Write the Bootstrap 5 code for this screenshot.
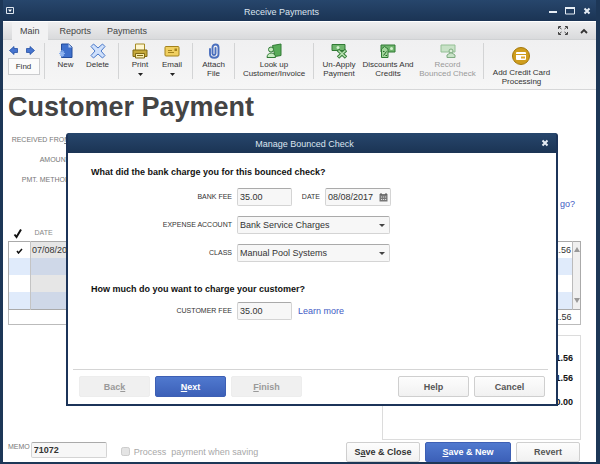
<!DOCTYPE html>
<html lang="en">
<head>
<meta charset="utf-8">
<meta name="viewport" content="width=device-width, initial-scale=1">
<title>Receive Payments</title>
<link href="https://cdn.jsdelivr.net/npm/bootstrap@5.3.0/dist/css/bootstrap.min.css" rel="stylesheet">
<style>
:root{--navy:#1d3757;--navy-grad:linear-gradient(#27466c,#1b3454)}
body{font-family:"Liberation Sans",Arial,sans-serif;font-size:9px;line-height:12px;color:#333;background:#fff}
button,input,select{font-family:inherit}
.app-window{border:solid var(--navy);border-width:0 4px 3px 3px;min-height:100vh}
.title-bar{background:var(--navy-grad);color:#dce5ef;height:21px;padding:0 5px 0 3px}
.bar-title{padding-top:2px}
.win-btn{background:none;border:0;padding:0;color:#e6edf5;line-height:0}
.tab-strip{background:linear-gradient(#eeeeef,#d9dadc);height:18px;margin-top:1px;border-bottom:1px solid #cfd1d3;padding-left:9px}
.tab-strip .nav-link{padding:3px 8px 2px;color:#444;font-size:9px;line-height:13px;border-radius:0}
.tab-strip .nav-link.active{background:#f2f2f3;padding:3px 8px}
.tool-bar{background:linear-gradient(#f0f0f1,#f6f6f6);height:50px;border-bottom:1px solid #d6d7d8;font-size:8px;line-height:9px;padding-top:3px}
.tool-group{height:36px;border-right:1px solid #d3d4d5}
.tool-group:last-child{border:0}
.tool{background:none;border:0;padding:0;color:#333;display:flex;flex-direction:column;align-items:center;align-self:flex-start;font-size:8px;line-height:9px}
.tool svg{margin-bottom:1px;flex-shrink:0}
.tool:disabled{color:#999}
.w-s{width:32px}.w-m{width:46px}.w-l{width:52px}.w-x{width:67px}
.g1{width:42px}.g2{width:74px}.g3{width:42px}.g4{width:79px}.g5{width:170px}.g6{width:75px}
.arrows{padding:3px 4px 3px 0}
.find-btn{width:32px;height:17px;border:1px solid #cbccce;background:#fbfbfb;font-size:8px;line-height:9px;padding:0;color:#333}
.page-title{font-size:27px;line-height:34px;font-weight:700;color:#444;margin:0;padding-left:5px}
.cap-label{font-size:7px;line-height:10px;color:#777}
.back-form{padding:6px 5px 0 5px}
.back-form .f-row{height:20px;width:62px}
.blue-link{color:#3f5bc4;text-decoration:none}
.ledger-wrap{margin:0 15px 0 5px}
.ledger{width:100%;table-layout:fixed;border-collapse:collapse}
.ledger th{font-weight:400;font-size:7px;color:#888;height:15px;padding:0 0 0 4px;line-height:10px}
.ledger td{height:17px;padding:0 1px;line-height:12px;vertical-align:middle}
.ledger tbody td:nth-child(2){background:#e6e6e6;border-left:1px solid #c4c4c4}
.ledger tbody tr:nth-child(even) td{background:#e0ebfb}
.ledger tbody tr:nth-child(even) td:nth-child(2){background:#cfd8e8}
.ledger tbody{border:1px solid #aaa}
.ledger tfoot{border:1px solid #bbb}
.ledger tfoot td{height:15px}
.ledger .scroll-cell,.ledger tbody tr:nth-child(even) td.scroll-cell{background:#f0f0f0;border-left:1px solid #bbb;padding:0;text-align:center;line-height:0}
.c-check{width:22px}.c-scroll{width:8px}
.sum-box{border:1px solid #dcdcdc;width:199px;height:105px;margin:10px 15px 0 auto;padding:16px 7px 0;color:#111;font-weight:700}
.field{border:1px solid #d4d4d4;border-top-color:#aaa;border-radius:2px;background:#f7f7f7;color:#333;font-size:9px;line-height:12px;height:18px;padding:0 2px;min-width:0}
.memo-field{width:76px;height:16px;font-weight:700}
.foot-bar{padding:2px 16px 0 5px;height:22px}
.foot-bar .cap-label{margin-right:1px}
.proc{margin-left:14px}
.tick{width:9px;height:9px;margin:0;border-radius:2px;background:#e4e4e4;border-color:#ccc}
.tick:disabled,.tick:disabled~label{opacity:1}
.tick~label{color:#a8a8a8}
.app-btn{--bs-btn-padding-x:0px;--bs-btn-padding-y:0px;--bs-btn-font-size:9px;--bs-btn-line-height:12px;--bs-btn-font-weight:700;--bs-btn-border-radius:2px;--bs-btn-color:#555;--bs-btn-border-color:#cfcfcf;--bs-btn-disabled-color:#999;--bs-btn-disabled-border-color:#ededed;--bs-btn-disabled-opacity:1;background:linear-gradient(#fdfdfd,#f1f1f1);width:71px;height:21px}
.app-btn:disabled{background:#f0f0f0}
.app-btn.go{--bs-btn-color:#fff;--bs-btn-border-color:#3d5fb4;background:linear-gradient(#5079cf,#3c60b8)}
.btn-run{gap:5px}
.foot-bar .app-btn{height:20px;width:74px;--bs-btn-color:#333}
.foot-bar .app-btn.go{width:86px;--bs-btn-color:#fff}
.foot-bar .app-btn.short{width:64px;--bs-btn-color:#555}
.check-dialog{top:133px;left:63px;right:38px;background:#fff;border:solid #1c3459;border-width:0 2px 2px;border-radius:3px 3px 0 0}
.dlg-head{background:var(--navy-grad);color:#dce5ef;height:20px;padding:0 7px 0 0}
.dlg-body{padding:13px 12px 0 23px;color:#222}
.dlg-body h2{font-size:9px;line-height:12px;font-weight:700;margin:0;color:#111}
.dlg-body .cap-label{color:#333;width:141px;text-align:right;margin-right:5px}
.dlg-body .cap-label.side{width:28px}
.line{height:18px;margin-bottom:10px}
.first-line{margin-top:10px}
.second-q{padding:11px 0 7px}
.fee{width:55px}
.wide{width:153px}
.more{margin-left:6px}
select.field{appearance:none;background:#f7f7f7 url("data:image/svg+xml,%3Csvg xmlns='http://www.w3.org/2000/svg' viewBox='0 0 6 3'%3E%3Cpath d='M0 0h6L3 3z' fill='%23444'/%3E%3C/svg%3E") no-repeat right 4px center/6px 3px}
.date-box{width:66px}
.date-box input{border:0;background:none;padding:0;width:48px;font-size:9px;line-height:12px;color:#333}
.dlg-foot{border-top:1px solid #d5d5d5;margin:49px 8px 0 5px;padding:6px 3px 7px 6px}
</style>
<script src="https://cdn.jsdelivr.net/npm/bootstrap@5.3.0/dist/js/bootstrap.bundle.min.js"></script>
</head>
<body>
<div class="app-window position-relative d-flex flex-column">
  <header class="title-bar d-flex align-items-center">
    <button class="win-btn" aria-label="Window menu"><svg width="8" height="7"><path d="M.5.5h7v6h-7z" fill="none" stroke="#dfe7f0"/><path d="M2 2.500h4L4 5z" fill="#fff"/></svg></button>
    <span class="bar-title flex-fill text-center">Receive Payments</span>
    <div class="d-flex gap-2 align-items-center">
      <button class="win-btn" aria-label="Minimize"><svg width="8" height="8"><path d="M0 4h8v2H0z" fill="currentColor"/></svg></button>
      <button class="win-btn" aria-label="Maximize"><svg width="10" height="8"><path d="M.5 1h9v6h-9z" fill="none" stroke="currentColor"/><path d="M0 0h10v2H0z" fill="currentColor"/></svg></button>
      <button class="win-btn" aria-label="Close"><svg width="8" height="8"><path d="M1.500 1.500l5 5m0-5l-5 5" stroke="currentColor" stroke-width="2"/></svg></button>
    </div>
  </header>

  <nav class="tab-strip d-flex">
    <div class="nav">
      <a class="nav-link active" href="#">Main</a>
      <a class="nav-link ms-1" href="#">Reports</a>
      <a class="nav-link" href="#">Payments</a>
    </div>
    <div class="ms-auto d-flex gap-2 align-items-center pe-2">
      <button class="win-btn text-dark" aria-label="Expand"><svg width="10" height="9" viewBox="0 0 10 9" fill="none" stroke="#444"><path d="M.5 3V.5H3M7 .5h2.500V3M9.500 6v2.500H7M3 8.500H.500V6M1 1l2.500 2M9 1L6.500 3M9 8L6.500 6M1 8l2.500-2"/></svg></button>
      <button class="win-btn text-dark ms-1" aria-label="Collapse"><svg width="8" height="6"><path d="M1 5l3-3 3 3" fill="none" stroke="#333" stroke-width="1.800"/></svg></button>
    </div>
  </nav>

  <div class="tool-bar d-flex">
    <div class="tool-group g1 d-flex flex-column align-items-center">
      <div class="arrows d-flex gap-2 lh-1">
        <button class="win-btn" aria-label="Previous"><svg width="9" height="9" viewBox="0 0 9 9"><path d="M.5 4.500L5 .5v2h3.500v4H5v2z" fill="#4674cf" stroke="#2450a4" stroke-width=".8"/></svg></button>
        <button class="win-btn" aria-label="Next"><svg width="9" height="9" viewBox="0 0 9 9"><path d="M8.500 4.500L4 .5v2H.5v4H4v2z" fill="#4674cf" stroke="#2450a4" stroke-width=".8"/></svg></button>
      </div>
      <button class="find-btn flex-shrink-0">Find</button>
    </div>
    <div class="tool-group g2 d-flex justify-content-center">
      <button class="tool w-s"><svg width="16" height="16" viewBox="0 0 16 16"><path d="M3.500 1h7l3.500 3v10.500H3.500z" fill="#3f70cc" stroke="#234c9c"/><path d="M10.500 1v3.500H14z" fill="#bcd2f5"/><path d="M4 7v7M1 10.500h6M2 8.500l4 4M6 8.500l-4 4" stroke="#8eb3ef" stroke-width="1.200"/></svg>New</button>
      <button class="tool w-s"><svg width="16" height="16" viewBox="0 0 16 16"><path d="M1 3.500L3.500 1 8 5l4.500-4L15 3.500 11 8l4 4.500-2.500 2.500L8 11l-4.500 4L1 12.500 5 8z" fill="#cfe0fb" stroke="#4a78c8" stroke-linejoin="round"/></svg>Delete</button>
    </div>
    <div class="tool-group g2 d-flex justify-content-end pe-1">
      <button class="tool w-s"><svg width="16" height="16" viewBox="0 0 16 16"><path d="M3.500 7V1h9v6" fill="#fff7d0" stroke="#a58b25"/><path d="M1 7h14v6.500H1z" fill="#c6a93b" stroke="#806a14"/><path d="M3.500 10.500h9V15h-9z" fill="#f7ecb0" stroke="#806a14"/><path d="M5 12.500h6" stroke="#806a14"/></svg>Print<svg class="mt-1" width="5" height="3"><path d="M0 0h5L2.500 3z" fill="#222"/></svg></button>
      <button class="tool w-s"><svg width="16" height="16" viewBox="0 0 16 16"><rect x="1" y="3.500" width="14" height="9.500" rx="1" fill="#f0cf60" stroke="#a3821c"/><path d="M10.500 5.500h2.500v2.500h-2.500z" fill="#a3821c"/><path d="M4 7.500h4M4 9.500h6" stroke="#a3821c"/></svg>Email<svg class="mt-1" width="5" height="3"><path d="M0 0h5L2.500 3z" fill="#222"/></svg></button>
    </div>
    <div class="tool-group g3 d-flex justify-content-center">
      <button class="tool w-s"><svg width="16" height="16" viewBox="0 0 16 16"><path d="M9.500 5v5.500c0 2-3 2-3 0V4.500c0-4 6-4 6 0V11c0 5-8.500 5-8.500 0V6" fill="none" stroke="#4a6fbe" stroke-width="1.900" stroke-linecap="round"/></svg>Attach<br>File</button>
    </div>
    <div class="tool-group g4 d-flex justify-content-center">
      <button class="tool"><svg width="16" height="16" viewBox="0 0 16 16"><path d="M6.500 2.500L15 1v11.500l-6 1z" fill="#58ab58" stroke="#317a35"/><circle cx="5" cy="6.500" r="2.500" fill="#c7ebc1" stroke="#317a35"/><path d="M1 14.500c0-6 8.500-6 8.500 0z" fill="#c7ebc1" stroke="#317a35"/></svg>Look up<br>Customer/Invoice</button>
    </div>
    <div class="tool-group g5 d-flex justify-content-center">
      <button class="tool w-m"><svg width="16" height="16" viewBox="0 0 16 16"><path d="M1 1.500h13v6H1z" fill="#6fb56d" stroke="#317a35"/><circle cx="7" cy="4.500" r="1.500" fill="#d4f0cf"/><path d="M7 7l8 7.500M15 7l-8 7.500" stroke="#317a35" stroke-width="3.400"/><path d="M7.500 7.500l7 6.500M14.500 7.500l-7 6.500" stroke="#b9e3b2" stroke-width="1.600"/></svg>Un-Apply<br>Payment</button>
      <button class="tool w-l"><svg width="16" height="16" viewBox="0 0 16 16"><path d="M1 2h14v7H1z" fill="#6fb56d" stroke="#317a35"/><circle cx="11.500" cy="5.500" r="1.500" fill="#d4f0cf"/><path d="M1.500 6l3-2.500L8 6v8.500H1.500z" fill="#a3d79c" stroke="#317a35"/><path d="M3.500 12.500l3-4M3 8.500h1.500M5.500 12.500H7" stroke="#24642a"/></svg>Discounts And<br>Credits</button>
      <button class="tool w-x" disabled><svg width="16" height="16" viewBox="0 0 16 16"><path d="M1 2h14v7H1z" fill="#c8e2c7" stroke="#94c095"/><circle cx="11" cy="8" r="2" fill="#dcefd9" stroke="#7fac81"/><path d="M7 14.500V12l3-2h2l3 2v2.500z" fill="#c8e2c7" stroke="#7fac81"/></svg>Record<br>Bounced Check</button>
    </div>
    <div class="tool-group g6 d-flex justify-content-center">
      <button class="tool"><svg class="mt-1" width="20" height="20" viewBox="0 0 20 20"><circle cx="10" cy="9" r="8.500" fill="#cf9d1c" stroke="#a4780c"/><rect x="5" y="5" width="10" height="8" rx="1" fill="#fff"/><path d="M5 7.500h10" stroke="#cf9d1c"/><path d="M10 9.500h4v2h-4z" fill="#e0a92c"/></svg>Add Credit Card<br>Processing</button>
    </div>
  </div>

  <main>
    <h1 class="page-title">Customer Payment</h1>
    <div class="back-form">
      <div class="f-row cap-label d-flex align-items-center justify-content-end text-nowrap">RECEIVED FRO<u>M</u></div>
      <div class="f-row cap-label d-flex align-items-center justify-content-end text-nowrap">AMOUNT</div>
      <div class="f-row cap-label d-flex align-items-center justify-content-end text-nowrap">PMT. METHOD</div>
      <div class="text-end pe-3 pt-2"><a class="blue-link" href="#">go?</a></div>
    </div>
    <div class="ledger-wrap pt-3">
      <table class="ledger">
        <colgroup><col class="c-check"><col><col><col class="c-scroll"></colgroup>
        <thead><tr><th><svg width="10" height="11" viewBox="0 0 10 11"><path d="M1.500 6.500L3.500 9 8 1.500" fill="none" stroke="#111" stroke-width="2"/></svg></th><th>DATE</th><th></th><th></th></tr></thead>
        <tbody>
          <tr><td class="text-center"><svg width="7" height="7" viewBox="0 0 7 7"><path d="M1 4l1.500 2L6 2" fill="none" stroke="#111" stroke-width="1.500"/></svg></td><td>07/08/2017</td><td class="text-end">1.56</td><td class="scroll-cell"><svg width="6" height="5"><path d="M0 5h6L3 0z" fill="#999"/></svg></td></tr>
          <tr><td></td><td></td><td></td><td class="scroll-cell"></td></tr>
          <tr><td></td><td></td><td></td><td class="scroll-cell"></td></tr>
          <tr><td></td><td></td><td></td><td class="scroll-cell"><svg width="6" height="5"><path d="M0 0h6L3 5z" fill="#999"/></svg></td></tr>
        </tbody>
        <tfoot><tr><td></td><td></td><td class="text-end">1.56</td><td></td></tr></tfoot>
      </table>
    </div>
    <div class="sum-box d-flex flex-column text-end">
      <span class="mb-2">1.56</span><span class="mb-2 pb-1">1.56</span><span>0.00</span>
    </div>
  </main>

  <footer class="foot-bar d-flex align-items-start">
    <label class="cap-label" for="memo">MEMO</label>
    <input class="field memo-field" id="memo" value="71072">
    <div class="proc d-flex align-items-center gap-1 pt-1">
      <input class="form-check-input tick" type="checkbox" id="proc" disabled>
      <label for="proc">Process&nbsp; payment when saving</label>
    </div>
    <div class="btn-run d-flex ms-auto">
      <button class="btn app-btn">S<u>a</u>ve &amp; Close</button>
      <button class="btn app-btn go"><u>S</u>ave &amp; New</button>
      <button class="btn app-btn short">Revert</button>
    </div>
  </footer>

  <section class="check-dialog position-absolute" role="dialog" aria-labelledby="dlgTitle">
    <div class="dlg-head d-flex align-items-center">
      <span class="bar-title flex-fill text-center" id="dlgTitle">Manage Bounced Check</span>
      <button class="win-btn" aria-label="Close dialog"><svg width="8" height="8"><path d="M1.500 1.500l5 5m0-5l-5 5" stroke="currentColor" stroke-width="2"/></svg></button>
    </div>
    <div class="dlg-body">
      <h2>What did the bank charge you for this bounced check?</h2>
      <div class="line first-line d-flex align-items-center">
        <label class="cap-label" for="fee">BANK FEE</label>
        <input class="field fee" id="fee" value="35.00">
        <label class="cap-label side" for="date">DATE</label>
        <div class="field date-box d-flex align-items-center justify-content-between">
          <input id="date" value="08/08/2017">
          <button class="win-btn" aria-label="Pick date"><svg width="9" height="9" viewBox="0 0 9 9"><path d="M.5 1h8v7.500h-8z" fill="#777"/><path d="M2 0v2M7 0v2" stroke="#555"/><path d="M2 4h1.200M4 4h1.200M6 4h1.200M2 6.500h1.200M4 6.500h1.200M6 6.500h1.200" stroke="#ddd"/></svg></button>
        </div>
      </div>
      <div class="line d-flex align-items-center">
        <label class="cap-label" for="acct">EXPENSE ACCOUNT</label>
        <select class="field wide" id="acct"><option>Bank Service Charges</option></select>
      </div>
      <div class="line d-flex align-items-center">
        <label class="cap-label" for="cls">CLASS</label>
        <select class="field wide" id="cls"><option>Manual Pool Systems</option></select>
      </div>
      <h2 class="second-q">How much do you want to charge your customer?</h2>
      <div class="line d-flex align-items-center">
        <label class="cap-label" for="cfee">CUSTOMER FEE</label>
        <input class="field fee" id="cfee" value="35.00">
        <a class="blue-link more" href="#">Learn more</a>
      </div>
    </div>
    <div class="dlg-foot btn-run d-flex">
      <button class="btn app-btn" disabled>Bac<u>k</u></button>
      <button class="btn app-btn go"><u>N</u>ext</button>
      <button class="btn app-btn" disabled><u>F</u>inish</button>
      <button class="btn app-btn ms-auto">Help</button>
      <button class="btn app-btn">Cancel</button>
    </div>
  </section>
</div>
</body>
</html>
